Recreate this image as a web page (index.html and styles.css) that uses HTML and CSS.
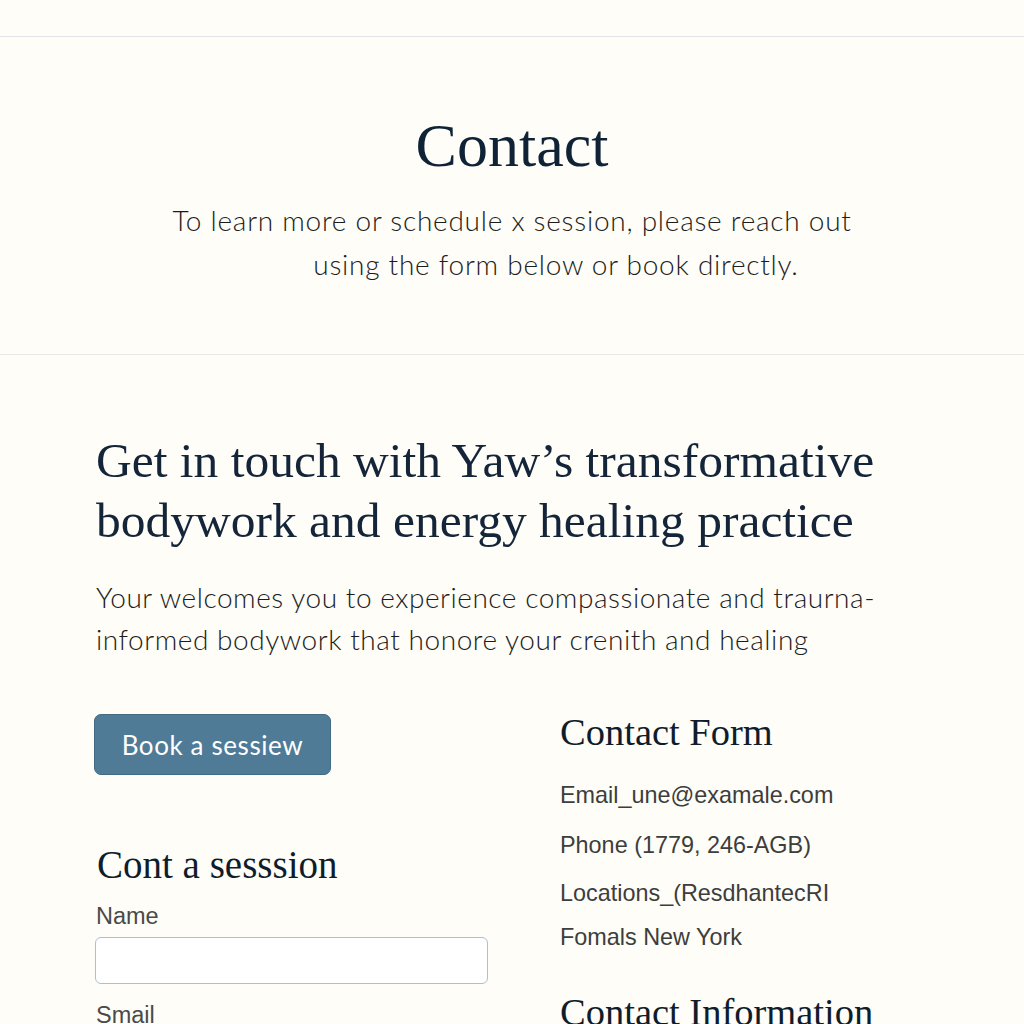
FILE: index.html
```html
<!DOCTYPE html>
<html lang="en">
<head>
<meta charset="utf-8">
<title>Contact</title>
<link rel="stylesheet" href="styles.css">
</head>
<body>
<div class="topbar"></div>
<header class="hero">
  <h1 class="hero-title">Contact</h1>
  <p class="hero-sub"><span class="l1">To learn more or schedule x session, please reach out</span><span class="l2">using the form below or book directly.</span></p>
</header>
<main class="main">
  <h2 class="lead-title">Get in touch with Yaw’s transformative bodywork and energy healing practice</h2>
  <p class="lead-text">Your welcomes you to experience compassionate and traurna-informed bodywork that honore your crenith and healing</p>
  <div class="cols">
    <div class="col-left">
      <a class="btn" href="#">Book a sessiew</a>
      <h3 class="sub-title">Cont a sesssion</h3>
      <form class="form">
        <label class="label">Name</label>
        <input class="input" type="text">
        <label class="label">Smail</label>
        <input class="input" type="text">
      </form>
    </div>
    <div class="col-right">
      <h3 class="side-title">Contact Form</h3>
      <ul class="info">
        <li>Email_une@examale.com</li>
        <li>Phone (1779, 246-AGB)</li>
        <li>Locations_(ResdhantecRI</li>
        <li>Fomals New York</li>
      </ul>
      <h3 class="side-title info-title">Contact Information</h3>
    </div>
  </div>
</main>
</body>
</html>
```
FILE: styles.css
```css
* { box-sizing: border-box; }
html, body { margin: 0; padding: 0; }
body {
  background: #fefdf7;
  color: #14253a;
  font-family: "Lato", "Open Sans", sans-serif;
  overflow: hidden;
  height: 1024px;
}
.topbar {
  height: 37px;
  border-bottom: 1px solid #e6e5ec;
}
.hero {
  border-bottom: 1px solid #ebe9e4;
  padding: 73px 0 68px;
  text-align: center;
}
.hero-title {
  margin: 0;
  font-family: "Liberation Serif", serif;
  font-weight: 400;
  font-size: 62px;
  line-height: 70px;
  color: #0f2236;
}
.hero-sub {
  margin: 18px 0 0;
  font-size: 28px;
  font-weight: 300;
  letter-spacing: 0.75px;
  line-height: 44px;
  color: #1c1c1c;
}
.hero-sub span { display: block; }
.hero-sub .l2 { padding-left: 88px; }
.main {
  padding: 76px 96px 0;
}
.lead-title {
  margin: 0;
  font-family: "Liberation Serif", serif;
  font-weight: 400;
  font-size: 49.5px;
  line-height: 60px;
  color: #14253a;
  max-width: 820px;
}
.lead-text {
  margin: 25px 0 0;
  font-size: 28px;
  font-weight: 300;
  letter-spacing: 0.55px;
  line-height: 42px;
  color: #1c1c1c;
  max-width: 800px;
}
.cols {
  display: grid;
  grid-template-columns: 464px 1fr;
  margin-top: 54px;
}
.col-left { margin-left: -2px; }
.btn {
  display: inline-flex;
  align-items: center;
  justify-content: center;
  width: 237px;
  height: 61px;
  background: #4f7b97;
  border: 1px solid #416a85;
  border-radius: 7px;
  color: #fff;
  text-decoration: none;
  font-size: 26px;
  font-weight: 400;
  letter-spacing: 0.6px;
}
.sub-title {
  margin: 68px 0 0 3px;
  font-family: "Liberation Serif", serif;
  font-weight: 400;
  font-size: 39px;
  line-height: 44px;
  color: #0f1c2c;
}
.form { display: flex; flex-direction: column; }
.label {
  margin: 16px 0 0 2px;
  font-family: "Liberation Sans", Arial, sans-serif;
  font-size: 23.5px;
  line-height: 26px;
  color: #4a4a4a;
}
.input {
  margin: 8px 0 0 1px;
  width: 393px;
  height: 47px;
  border: 1px solid #a9bfdb;
  border-radius: 6px;
  background: #fff;
}
.form .input + .label { margin-top: 18px; }
.side-title {
  margin: 0;
  font-family: "Liberation Serif", serif;
  font-weight: 400;
  font-size: 38.5px;
  line-height: 36px;
  color: #0f1c2c;
}
.info {
  list-style: none;
  margin: 32px 0 0;
  padding: 0;
  font-family: "Liberation Sans", Arial, sans-serif;
  font-size: 23.4px;
  color: #3d3d3d;
}
.info li { line-height: 26px; margin-bottom: 24px; }
.info li:nth-child(2) { margin-bottom: 22px; }
.info li:nth-child(3) { margin-bottom: 18px; }
.info-title { margin-top: 42px; line-height: 40px; }
```
